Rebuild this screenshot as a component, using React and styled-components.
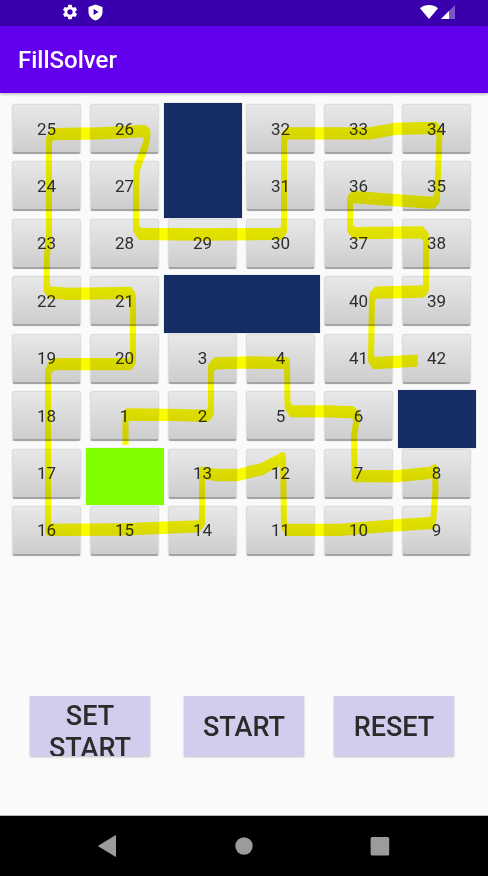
import styled, { createGlobalStyle } from "styled-components";

const GlobalStyle = createGlobalStyle`
  html, body {
    margin: 0;
    padding: 0;
    height: 100%;
    background: #fafafa;
    font-family: Roboto, "Liberation Sans", sans-serif;
  }
  #root {
    height: 100%;
  }
`;

const Screen = styled.div`
  width: 488px;
  height: 876px;
  display: flex;
  flex-direction: column;
  overflow: hidden;
`;

const StatusBar = styled.div`
  box-sizing: border-box;
  height: 26px;
  flex: none;
  background: #3a00ad;
  display: flex;
  align-items: center;
  justify-content: space-between;
  padding: 0 33px 2px 61px;
`;

const StatusGroup = styled.div`
  display: flex;
  align-items: center;
  gap: ${(props) => props.$gap}px;
`;

const AppBar = styled.header`
  height: 67px;
  flex: none;
  background: #6200ee;
  box-shadow: 0 1px 3px rgba(0, 0, 0, 0.3);
  display: flex;
  align-items: center;
  padding-left: 18px;
  color: #fff;
  font-size: 24px;
  font-weight: 500;
  position: relative;
  z-index: 2;
`;

const Main = styled.main`
  flex: 1;
  display: flex;
  flex-direction: column;
  padding: 10px 12px 0 8px;
`;

const Board = styled.div`
  position: relative;
  display: grid;
  grid-template-columns: repeat(6, 78px);
  grid-auto-rows: 57.43px;
`;

const Cell = styled.div`
  grid-column: ${(props) => props.$col} / span ${(props) => props.$w || 1};
  grid-row: ${(props) => props.$row} / span ${(props) => props.$h || 1};
`;

const Wall = styled(Cell)`
  background: #152c64;
  box-shadow: 0 0 1px rgba(0, 0, 0, 0.3);
`;

const StartCell = styled(Cell)`
  background: #7fff00;
  box-shadow: 0 0 1px rgba(0, 0, 0, 0.2);
`;

const NumButton = styled.button`
  display: flex;
  align-items: center;
  justify-content: center;
  box-sizing: border-box;
  width: 69px;
  height: 50px;
  margin: 1px 5px 0 4px;
  padding: 0;
  border: 1px solid #dcdcdc;
  border-bottom: 2px solid #a4a4a4;
  border-radius: 3px;
  background: linear-gradient(#e8e8e8, #cdcdcd);
  box-shadow: 0 0 1px rgba(0, 0, 0, 0.3);
  color: #2e2e2e;
  font-family: inherit;
  font-size: 17px;
`;

const Trail = styled.svg`
  position: absolute;
  left: -8px;
  top: -103px;
  width: 488px;
  height: 876px;
  pointer-events: none;
  mix-blend-mode: multiply;
`;

const Actions = styled.div`
  display: flex;
  margin: 134px 0 0 22px;
`;

const ActionButton = styled.button`
  box-sizing: border-box;
  width: 120px;
  height: 60px;
  margin-left: ${(props) => props.$gap}px;
  padding: 2px 6px 0;
  border: 0;
  background: #d3cded;
  box-shadow: 0 1px 2px rgba(0, 0, 0, 0.25);
  color: #2b2b2b;
  font-family: inherit;
  font-size: 27px;
  font-weight: 500;
  line-height: 32px;
  overflow: hidden;
`;

const ClippedLabel = styled.span`
  display: block;
  margin-top: 2px;
`;

const NavBar = styled.nav`
  height: 61px;
  flex: none;
  background: #000;
  border-top: 1px solid #b8b8b8;
  box-sizing: border-box;
  display: flex;
  align-items: center;
`;

const NavIcon = styled.svg`
  display: block;
  width: 24px;
  height: 24px;
  margin-left: ${(props) => props.$left}px;
  fill: #9b9b9b;
`;

// row, column (1 based) of every numbered button, top to bottom
const layout = [
  [25, 26, null, 32, 33, 34],
  [24, 27, null, 31, 36, 35],
  [23, 28, 29, 30, 37, 38],
  [22, 21, null, null, 40, 39],
  [19, 20, 3, 4, 41, 42],
  [18, 1, 2, 5, 6, null],
  [17, null, 13, 12, 7, 8],
  [16, 15, 14, 11, 10, 9],
];

// hand drawn solution, in page pixels
const route = [
  [125.5, 445], [125.5, 420], [127, 414.5], [170, 415], [207, 416], [211, 412],
  [211, 368], [215, 363.5], [250, 362.5], [287, 363], [287.5, 405], [291, 411],
  [330, 411.5], [353, 412.5], [357, 417], [354, 436], [354.5, 476], [395, 476.5],
  [430, 473], [435, 470], [435.5, 490], [433, 523], [395, 525.5], [340, 530],
  [287, 530], [284, 525], [283, 458], [262, 469], [238, 475], [215, 475],
  [202, 472.5], [202, 522], [198, 526.5], [120, 529.5], [48, 530], [48, 373],
  [50, 367], [55, 364], [130, 364], [133, 360], [133, 297], [130, 293],
  [70, 294], [50, 292.5], [46.5, 288], [47, 255], [49, 235], [49, 140],
  [52, 134], [100, 133.5], [144, 131], [147.5, 133], [146, 144], [137, 168],
  [136, 188], [136, 228], [140, 234], [200, 234.5], [280, 234], [284, 230],
  [284, 137], [288, 133.5], [370, 133.5], [395, 129], [436, 128], [439.5, 133],
  [437, 199], [433, 203], [395, 200], [353, 197], [350, 200], [350, 228],
  [354, 233], [422, 232.5], [426, 237], [426, 288], [423, 291.5], [376, 292.5],
  [372, 297], [371, 359], [374, 363], [417.5, 360.5],
];

// the line was painted on a stretched bitmap: strokes are thicker going across
const STRETCH = 2.05;
const routePoints = route.map(([x, y]) => `${x},${(y / STRETCH).toFixed(1)}`).join(" ");

export default function App() {
  return (
    <Screen>
      <GlobalStyle />
      <StatusBar>
        <StatusGroup $gap={9}>
          <svg width="18" height="18" viewBox="0 0 24 24" fill="#fff">
            <path d="M19.14 12.94c.04-.3.06-.61.06-.94 0-.32-.02-.64-.07-.94l2.03-1.58c.18-.14.23-.41.12-.61l-1.92-3.32c-.12-.22-.37-.29-.59-.22l-2.39.96c-.5-.38-1.03-.7-1.62-.94l-.36-2.54c-.04-.24-.24-.41-.48-.41h-3.84c-.24 0-.43.17-.47.41l-.36 2.54c-.59.24-1.13.57-1.62.94l-2.39-.96c-.22-.08-.47 0-.59.22L2.74 8.87c-.12.21-.08.47.12.61l2.03 1.58c-.05.3-.09.63-.09.94s.02.64.07.94l-2.03 1.58c-.18.14-.23.41-.12.61l1.92 3.32c.12.22.37.29.59.22l2.39-.96c.5.38 1.03.7 1.62.94l.36 2.54c.05.24.24.41.48.41h3.84c.24 0 .44-.17.47-.41l.36-2.54c.59-.24 1.13-.56 1.62-.94l2.39.96c.22.08.47 0 .59-.22l1.92-3.32c.12-.22.07-.47-.12-.61l-2.01-1.58zM12 15.6c-1.98 0-3.6-1.62-3.6-3.6s1.62-3.6 3.6-3.6 3.6 1.62 3.6 3.6-1.62 3.6-3.6 3.6z" />
          </svg>
          <svg width="15" height="17" viewBox="0 0 15 17">
            <path d="M7.5 0.5 L14.5 3 V8 C14.5 12 11.5 15.3 7.5 16.5 C3.5 15.3 0.5 12 0.5 8 V3 Z" fill="#fff" />
            <path d="M5.6 5 L10.6 8 L5.6 11 Z" fill="#3a00ad" />
          </svg>
        </StatusGroup>
        <StatusGroup $gap={3}>
          <svg width="18" height="14" viewBox="0 0 18 14">
            <path d="M0 3.2 C5 -1 13 -1 18 3.2 L9 14 Z" fill="#fff" />
          </svg>
          <svg width="14" height="14" viewBox="0 0 14 14">
            <path d="M14 0 V14 H0 Z" fill="#7d55c8" />
            <path d="M8 6 V14 H0 Z" fill="#fff" />
          </svg>
        </StatusGroup>
      </StatusBar>
      <AppBar>FillSolver</AppBar>
      <Main>
        <Board>
          {layout.map((cols, r) =>
            cols.map((num, c) =>
              num ? (
                <Cell key={num} $row={r + 1} $col={c + 1}>
                  <NumButton>{num}</NumButton>
                </Cell>
              ) : null
            )
          )}
          <Wall $row={1} $col={3} $h={2} />
          <Wall $row={4} $col={3} $w={2} />
          <Wall $row={6} $col={6} />
          <StartCell $row={7} $col={2} />
          <Trail viewBox="0 0 488 876">
            <g transform={`scale(1 ${STRETCH})`}>
              <polyline
                points={routePoints}
                fill="none"
                stroke="#ffff00"
                strokeWidth="6"
                strokeLinejoin="round"
              />
            </g>
          </Trail>
        </Board>
        <Actions>
          <ActionButton $gap={0}>
            <ClippedLabel>SET START</ClippedLabel>
          </ActionButton>
          <ActionButton $gap={34}>START</ActionButton>
          <ActionButton $gap={30}>RESET</ActionButton>
        </Actions>
      </Main>
      <NavBar>
        <NavIcon $left={95} viewBox="0 0 24 24">
          <path d="M21 1.5 V22.5 Q21 23 20 22.5 L3.5 12.5 Q3 12 3.5 11.5 L20 1.5 Q21 1 21 1.5 Z" />
        </NavIcon>
        <NavIcon $left={113} viewBox="0 0 24 24">
          <circle cx="12" cy="12" r="8.7" />
        </NavIcon>
        <NavIcon $left={112} viewBox="0 0 24 24">
          <rect x="2.6" y="3" width="18.6" height="18.4" rx="1.5" />
        </NavIcon>
      </NavBar>
    </Screen>
  );
}
